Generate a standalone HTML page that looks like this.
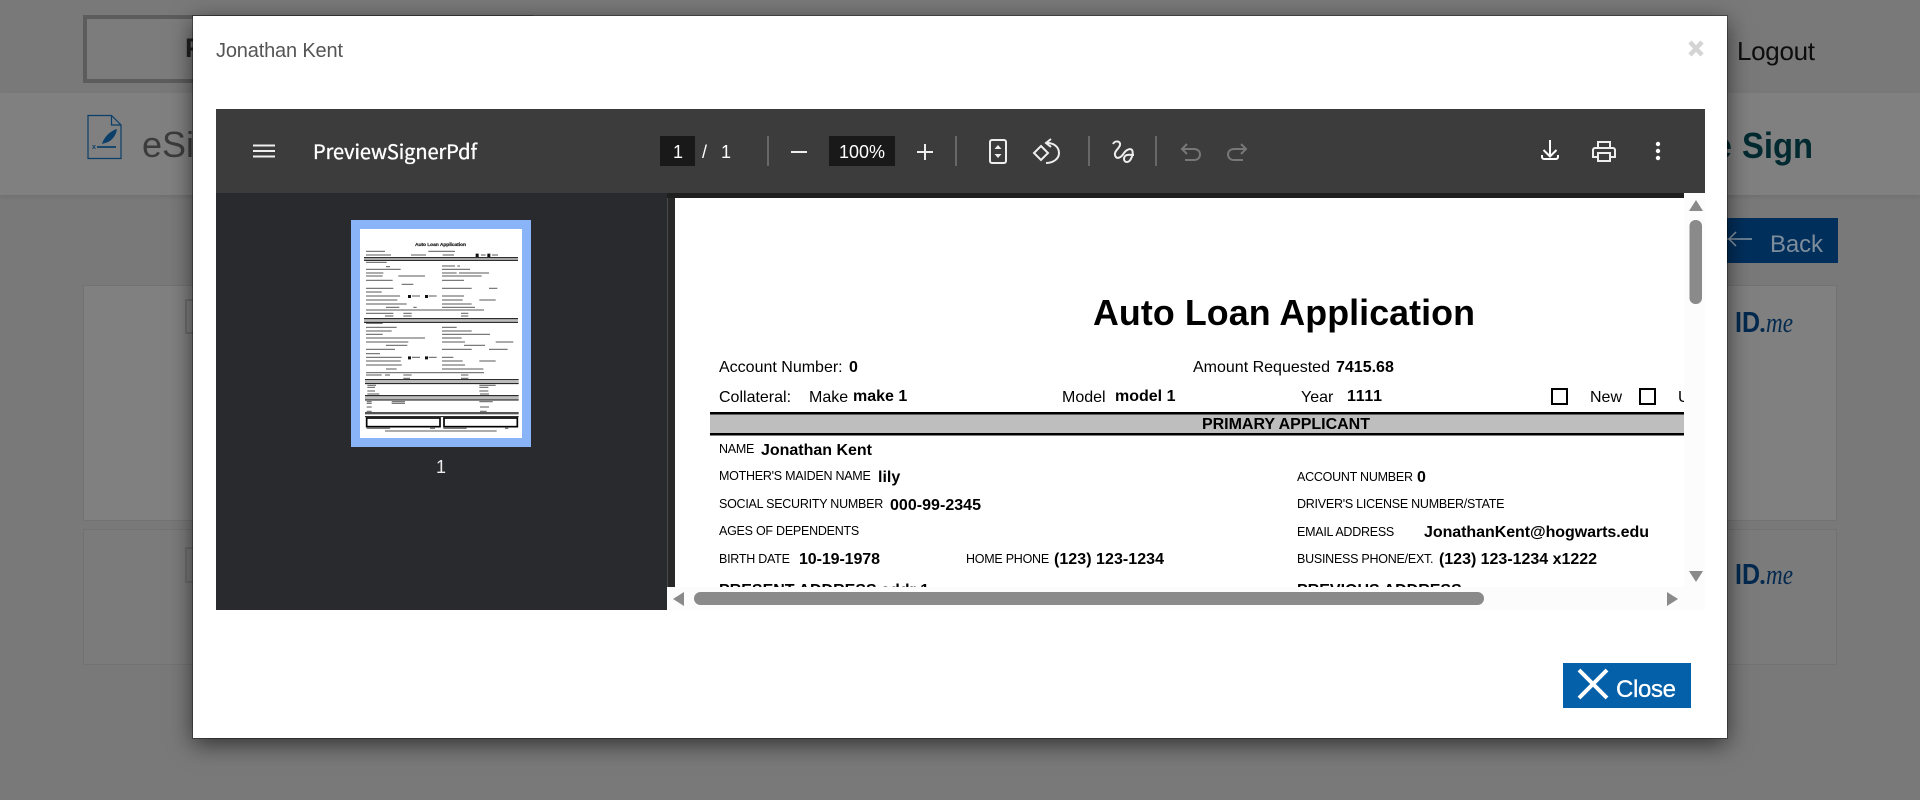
<!DOCTYPE html>
<html><head><meta charset="utf-8"><title>Jonathan Kent</title>
<style>
html,body{margin:0;padding:0;width:1920px;height:800px;overflow:hidden;background:#797979}
.a{position:absolute;box-sizing:border-box}
svg{position:absolute;left:0;top:0}
text{font-family:"Liberation Sans",Arial,sans-serif}
</style></head><body>
<div class="a" style="left:0;top:93px;width:1920px;height:102px;background:#808080;box-shadow:0 2px 4px rgba(0,0,0,.08)"></div>
<div class="a" style="left:83px;top:15px;width:450px;height:68px;border:4px solid #5c5c5c;background:#7c7c7c"></div>
<div class="a" style="left:83px;top:285px;width:1754px;height:236px;background:#808080;border:1px solid #727272"></div>
<div class="a" style="left:83px;top:529px;width:1754px;height:136px;background:#7b7b7b;border:1px solid #727272"></div>
<div class="a" style="left:1640px;top:218px;width:198px;height:45px;background:#012f5c"></div>
<svg width="1920" height="800">
<text x="185" y="57" font-size="27" fill="#222" font-weight="bold">P</text>
<text x="1737" y="60" font-size="26" fill="#0d0d0d" textLength="78">Logout</text>
<g fill="none" stroke="#0b3f6a" stroke-width="1.200">
<path d="M88 115.500H111.500L121 125V158.500H88Z"/><path d="M111.500 115.500V125H121"/>
<path d="M97 147H116" stroke-width="1.800"/></g>
<path d="M102 144C104 137 110 131 117 129C116 136 111 142 105 143Z" fill="#0b3f6a"/>
<text x="92" y="149" font-size="7" fill="#0b3f6a" font-weight="bold">x</text>
<text x="142" y="157" font-size="36" fill="#3c3c3c">eSign</text>
<text x="1712" y="158" font-size="36" font-weight="bold" fill="#012a30">e</text>
<text x="1742" y="158" font-size="36" font-weight="bold" fill="#012a30" textLength="71" lengthAdjust="spacingAndGlyphs">Sign</text>
<path d="M1710 239H1752M1736 232L1729 239L1736 246" fill="none" stroke="#8a98a5" stroke-width="1.500"/>
<text x="1770" y="252" font-size="24" fill="#7d8d9c" textLength="53">Back</text>
<rect x="186" y="300" width="8" height="33" fill="none" stroke="#686868" stroke-width="1.500"/>
<rect x="186" y="548" width="8" height="34" fill="none" stroke="#686868" stroke-width="1.500"/>
<g fill="#03294f">
<text x="1735" y="332" font-size="29" font-weight="bold" textLength="25" lengthAdjust="spacingAndGlyphs">ID</text>
<circle cx="1762.500" cy="330" r="2"/>
<text x="1766" y="332" font-size="28" font-style="italic" style="font-family:'Liberation Serif',serif" textLength="27" lengthAdjust="spacingAndGlyphs">me</text>
<text x="1735" y="584" font-size="29" font-weight="bold" textLength="25" lengthAdjust="spacingAndGlyphs">ID</text>
<circle cx="1762.500" cy="582" r="2"/>
<text x="1766" y="584" font-size="28" font-style="italic" style="font-family:'Liberation Serif',serif" textLength="27" lengthAdjust="spacingAndGlyphs">me</text>
</g>
</svg>
<div class="a" style="left:193px;top:16px;width:1534px;height:722px;background:#fff;box-shadow:0 0 0 1px rgba(0,0,0,.35),0 6px 22px rgba(0,0,0,.6)"></div>
<div class="a" style="left:216px;top:109px;width:1489px;height:84px;background:#3c3c3c"></div>
<div class="a" style="left:216px;top:193px;width:451px;height:417px;background:#292a2d"></div>
<div class="a" style="left:667px;top:193px;width:1017px;height:416px;background:#282828;border-left:1px solid #4a4a4a"></div>
<div class="a" style="left:667px;top:193px;width:1017px;height:5px;background:#1f1f1f"></div>
<div class="a" style="left:675px;top:198px;width:1009px;height:389px;background:#fff"></div>
<svg width="1920" height="800">
<defs><clipPath id="c"><rect x="675" y="198" width="1009" height="389"/></clipPath></defs>
<!-- modal header -->
<text x="216" y="57" font-size="20" fill="#555" textLength="127">Jonathan Kent</text>
<path d="M1690 42L1702 55M1702 42L1690 55" stroke="#d4d4d4" stroke-width="4.500"/>
<!-- toolbar -->
<path d="M253 145.500H275M253 151H275M253 156.500H275" stroke="#eee" stroke-width="2"/>
<text x="313" y="159" font-size="20" fill="#fff" stroke="#fff" stroke-width=".35" textLength="164" style="font-family:'Noto Sans CJK SC','Liberation Sans',sans-serif">PreviewSignerPdf</text>
<rect x="660" y="136" width="35" height="30" fill="#191919"/>
<rect x="829" y="136" width="66" height="30" fill="#191919"/>
<text x="673" y="158" font-size="18" fill="#fff">1</text>
<text x="702" y="158" font-size="18" fill="#fff">/</text>
<text x="721" y="158" font-size="18" fill="#fff">1</text>
<text x="839" y="158" font-size="18" fill="#fff" textLength="46">100%</text>
<path d="M768 136V166M956 136V166M1089 136V166M1156 136V166" stroke="#777" stroke-width="1.500"/>
<path d="M791 152H807M917 152H933M925 144V160" stroke="#eee" stroke-width="2"/>
<rect x="990" y="140" width="16" height="23" rx="2" fill="none" stroke="#eee" stroke-width="2"/>
<path d="M994.500 149L998 145L1001.500 149ZM994.500 154L998 158L1001.500 154Z" fill="#eee"/>
<path d="M1041 146L1048 153L1041 160L1034 153Z" fill="none" stroke="#eee" stroke-width="2"/>
<path d="M1047 143C1054 143 1059 147 1059 153C1059 159 1053 163 1046 163" fill="none" stroke="#eee" stroke-width="2"/>
<path d="M1051 139L1046 143L1051 147" fill="none" stroke="#eee" stroke-width="2"/>
<path d="M1113 144C1115 140 1121 141 1120 145C1119 149 1114 151 1115 155C1116 160 1121 158 1124 153C1126 150 1130 148 1132 150C1134 153 1131 162 1127 162C1123 162 1123 156 1127 155C1129 154.500 1131 155 1134 155" fill="none" stroke="#eee" stroke-width="2"/>
<path d="M1187 144L1182 149L1187 154M1182 149H1194C1202 149 1202 160 1194 160H1185" fill="none" stroke="#777" stroke-width="2"/>
<path d="M1241 144L1246 149L1241 154M1246 149H1234C1226 149 1226 160 1234 160H1243" fill="none" stroke="#777" stroke-width="2"/>
<path d="M1550 140V156M1543.500 150L1550 156.500L1556.500 150" fill="none" stroke="#fff" stroke-width="2"/>
<path d="M1542 155V157A2 2 0 0 0 1544 159H1556A2 2 0 0 0 1558 157V155" fill="none" stroke="#fff" stroke-width="2"/>
<path d="M1598 147V142H1610V147M1598 157H1593V150A2 2 0 0 1 1595 148H1613A2 2 0 0 1 1615 150V157H1610M1598 153H1610V161H1598Z" fill="none" stroke="#eee" stroke-width="2"/>
<circle cx="1658" cy="144" r="2.200" fill="#fff"/><circle cx="1658" cy="151" r="2.200" fill="#fff"/><circle cx="1658" cy="158" r="2.200" fill="#fff"/>
<!-- thumbnail -->
<rect x="351" y="220" width="180" height="227" fill="#8ab4f8"/>
<rect x="360" y="229" width="162" height="209" fill="#fff"/>
<text x="441" y="473" font-size="18" fill="#eee" text-anchor="middle">1</text>
<g transform="translate(340 210) scale(.33333)">
<text x="225" y="108" font-size="15" font-weight="bold" fill="#333" stroke="#333" stroke-width=".8" textLength="153">Auto Loan Application</text>
<path fill="none" stroke="#7a7a7a" stroke-width="3.800" d="M78 124H135M265 124H345M78 135H153M213 135H258M308 135H342M423 135H437M456 135H474M78 157H140M138 170H150M306 168H345M352 168H360M78 178H182M306 178H390M78 189H130M306 189H350M357 189H447M78 198H128M175 198H255M306 198H425M78 211H158M306 211H372M185 223H220M78 235H160M306 235H395M447 235H472M78 246H125M78 258H180M216 258H240M266 258H290M306 258H372M78 270H172M306 270H368M418 270H467M78 282H200M306 282H395M138 292H178M220 292H230M306 292H405M78 300H432M78 310H160M190 310H215M363 310H385M135 318H160M190 318H215M363 318H385M78 340H128M78 352H170M306 352H350M78 363H155M306 363H395M78 373H128M306 373H450M78 384H255M306 384H365M78 396H205M306 396H375M467 396H520M138 406H202M372 406H435M78 418H165M306 418H395M447 418H503M78 431H120M78 442H185M216 442H240M266 442H290M306 442H340M78 453H182M306 453H368M418 453H467M78 465H185M306 465H375M138 477H170M306 477H430M78 488H432M78 495H125M135 495H150M190 495H215M363 495H385M190 505H210M363 505H385M82 526H108M418 526H467M82 532H105M418 532H445M82 543H105M418 543H445M82 552H118M420 552H447M80 575H95M155 575H195M418 575H458M80 580H95M155 580H195M80 591H95M420 591H447M80 604H95M420 604H440M80 655H150M270 655H285M310 655H380M495 655H505M135 663H470"/>
<path fill="#bbb" d="M72 144H534V150H72ZM72 327H534V336H72ZM75 511H536V520H75ZM75 558H536V569H75Z"/>
<path fill="none" stroke="#111" stroke-width="3" d="M72 143H534M72 151H534M72 326H534M72 337H534M75 509H536M75 521H536M75 557H536M75 570H536M75 620H536"/>
<rect x="75" y="606" width="461" height="7" fill="#555"/>
<path fill="#111" d="M407 131h9v10h-9zM442 131h9v10h-9zM204 255h9v9h-9zM255 255h9v9h-9zM204 439h9v9h-9zM255 439h9v9h-9z"/>
<rect x="80" y="624" width="220" height="26" fill="none" stroke="#000" stroke-width="5"/>
<rect x="312" y="624" width="220" height="26" fill="none" stroke="#000" stroke-width="5"/>
</g>
<!-- page -->
<g clip-path="url(#c)" fill="#000">
<text x="1093" y="325" font-size="35.800" font-weight="bold" textLength="382">Auto Loan Application</text>
<g font-size="16">
<text x="719" y="372">Account Number:</text>
<text x="1193" y="372">Amount Requested</text>
<text x="719" y="402">Collateral:</text>
<text x="809" y="402">Make</text>
<text x="1062" y="402">Model</text>
<text x="1301" y="402">Year</text>
<text x="1590" y="402">New</text>
<text x="1678" y="402">Used</text>
</g>
<g font-size="16" font-weight="bold">
<text x="849" y="372">0</text>
<text x="1336" y="372">7415.68</text>
<text x="853" y="401">make 1</text>
<text x="1115" y="401">model 1</text>
<text x="1347" y="401" textLength="35">1111</text>
</g>
<rect x="1552" y="389" width="15" height="15" fill="#fff" stroke="#000" stroke-width="2"/>
<rect x="1640" y="389" width="15" height="15" fill="#fff" stroke="#000" stroke-width="2"/>
<rect x="710" y="414" width="974" height="19" fill="#bebebe"/>
<rect x="710" y="412" width="974" height="2.500" fill="#000"/>
<rect x="710" y="433" width="974" height="2.500" fill="#000"/>
<text x="1202" y="429" font-size="16" font-weight="bold" textLength="168">PRIMARY APPLICANT</text>
<g font-size="12.500" letter-spacing="-.25">
<text x="719" y="453">NAME</text>
<text x="719" y="480">MOTHER'S MAIDEN NAME</text>
<text x="719" y="508">SOCIAL SECURITY NUMBER</text>
<text x="719" y="535">AGES OF DEPENDENTS</text>
<text x="719" y="563">BIRTH DATE</text>
<text x="966" y="563">HOME PHONE</text>
<text x="1297" y="481">ACCOUNT NUMBER</text>
<text x="1297" y="508">DRIVER'S LICENSE NUMBER/STATE</text>
<text x="1297" y="536">EMAIL ADDRESS</text>
<text x="1297" y="563">BUSINESS PHONE/EXT.</text>
</g>
<g font-size="16" font-weight="bold">
<text x="761" y="455" textLength="111">Jonathan Kent</text>
<text x="878" y="482">lily</text>
<text x="890" y="510" textLength="91">000-99-2345</text>
<text x="799" y="564" textLength="81">10-19-1978</text>
<text x="1054" y="564" textLength="110">(123) 123-1234</text>
<text x="1417" y="482">0</text>
<text x="1424" y="537" textLength="225">JonathanKent@hogwarts.edu</text>
<text x="1439" y="564" textLength="158">(123) 123-1234 x1222</text>
<text x="719" y="595">PRESENT ADDRESS addr 1</text>
<text x="1297" y="595">PREVIOUS ADDRESS</text>
</g>
</g>
<!-- scrollbars -->
<rect x="1684" y="193" width="21" height="417" fill="#fcfcfc"/>
<rect x="667" y="587" width="1038" height="23" fill="#fcfcfc"/>
<rect x="1689.500" y="220" width="12.500" height="84" rx="6" fill="#8a8a8a"/>
<rect x="694" y="592" width="790" height="13" rx="6.500" fill="#8a8a8a"/>
<path d="M1696 200L1703 211H1689ZM1689 571H1703L1696 582ZM684 592V606L673 599ZM1667 592L1678 599L1667 606Z" fill="#8a8a8a"/>
<!-- close button -->
<rect x="1563" y="663" width="128" height="45" fill="#0360a9"/>
<path d="M1579 670L1607 698M1607 670L1579 698" stroke="#fff" stroke-width="4"/>
<text x="1616" y="697" font-size="24" fill="#fff" stroke="#fff" stroke-width=".3" textLength="60">Close</text>
</svg>
</body></html>
